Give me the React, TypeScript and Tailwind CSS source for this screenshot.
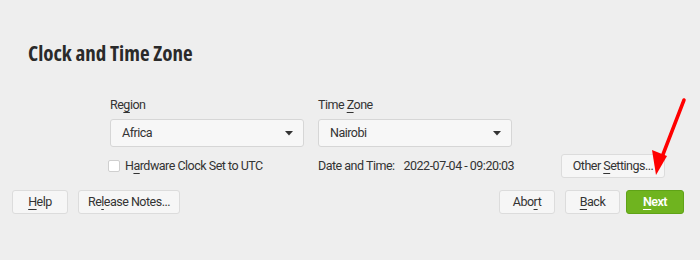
function Btn({
  children,
  className = "",
}: {
  children: React.ReactNode;
  className?: string;
}) {
  return (
    <button
      className={
        "h-6 rounded-[3px] border border-[#dcdcdc] bg-[#f6f6f6] text-[12.5px] text-[#333] flex items-center justify-center " +
        className
      }
    >
      <span>{children}</span>
    </button>
  );
}

function Combo({ value }: { value: string }) {
  return (
    <div className="h-7 w-[194px] rounded-[3px] border border-[#d6d6d6] bg-[#f7f7f7] flex items-center justify-between pl-[11px] pr-[10px] text-[12.5px] text-[#333]">
      <span>{value}</span>
      <svg width="8" height="5" viewBox="0 0 8 5">
        <path d="M0 0h8L4 4.5z" fill="#333" />
      </svg>
    </div>
  );
}

const U = ({ children }: { children: React.ReactNode }) => (
  <span className="underline underline-offset-[3px] decoration-1">{children}</span>
);

export default function App() {
  return (
    <div
      className="relative w-[700px] h-[260px] bg-[#eeeeee] text-[#333] flex flex-col tracking-[-0.5px]"
      style={{ fontFamily: "Roboto, 'Open Sans', sans-serif" }}
    >
      <h1
        className="pt-[39px] pl-[28px] text-[21px] leading-[28px] font-bold font-stretch-condensed tracking-normal text-[#2a2a2a]"
        style={{ fontFamily: "'Open Sans', sans-serif" }}
      >
        Clock and Time Zone
      </h1>

      <div className="mt-[30px] ml-[110px] grid grid-cols-[194px_194px] gap-x-[14px]">
        <div className="text-[12.5px] leading-4">
          Re<U>g</U>ion
        </div>
        <div className="text-[12.5px] leading-4">
          Time <U>Z</U>one
        </div>
        <div className="mt-[6px]">
          <Combo value="Africa" />
        </div>
        <div className="mt-[6px]">
          <Combo value="Nairobi" />
        </div>
      </div>

      <div className="mt-[7px] ml-[108px] flex items-center text-[12.5px]">
        <div className="w-[210px] flex items-center gap-[5px]">
          <span className="h-[12px] w-[12px] rounded-[2px] border border-[#cfcfcf] bg-white" />
          <span>
            H<U>a</U>rdware Clock Set to UTC
          </span>
        </div>
        <span>Date and Time:</span>
        <span className="ml-[9px]">2022-07-04 - 09:20:03</span>
        <Btn className="ml-auto mr-[35px] w-[104px]">
          Other <U>S</U>ettings...
        </Btn>
      </div>

      <div className="mt-[12px] px-[12px] flex items-center">
        <Btn className="w-[56px]">
          <U>H</U>elp
        </Btn>
        <Btn className="ml-[10px] w-[102px]">
          Re<U>l</U>ease Notes...
        </Btn>
        <Btn className="ml-auto w-[56px]">
          Abo<U>r</U>t
        </Btn>
        <Btn className="ml-[10px] w-[55px]">
          <U>B</U>ack
        </Btn>
        <button className="ml-[6px] mr-[4px] h-6 w-[58px] rounded-[3px] border border-[#5fa317] bg-[#6fb41f] text-[12.5px] font-semibold text-white flex items-center justify-center">
          <span>
            <U>N</U>ext
          </span>
        </button>
      </div>

      <svg
        className="absolute left-[640px] top-[95px]"
        width="56"
        height="85"
        viewBox="0 0 56 85"
      >
        <path d="M44 5 L22 62" stroke="#ff0000" strokeWidth="3.5" strokeLinecap="round" />
        <path d="M12 55 L27 61 L16 80 Z" fill="#ff0000" />
      </svg>
    </div>
  );
}
